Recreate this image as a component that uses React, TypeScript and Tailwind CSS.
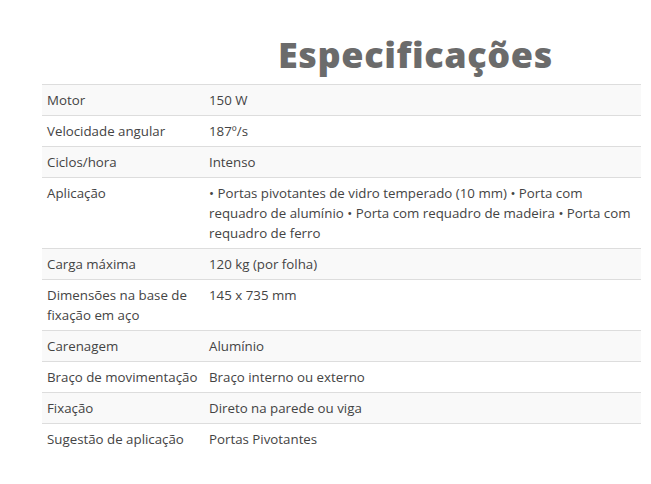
const rows: [string, string][] = [
  ['Motor', '150 W'],
  ['Velocidade angular', '187º/s'],
  ['Ciclos/hora', 'Intenso'],
  [
    'Aplicação',
    '• Portas pivotantes de vidro temperado (10 mm) • Porta com requadro de alumínio • Porta com requadro de madeira • Porta com requadro de ferro',
  ],
  ['Carga máxima', '120 kg (por folha)'],
  ['Dimensões na base de fixação em aço', '145 x 735 mm'],
  ['Carenagem', 'Alumínio'],
  ['Braço de movimentação', 'Braço interno ou externo'],
  ['Fixação', 'Direto na parede ou viga'],
  ['Sugestão de aplicação', 'Portas Pivotantes'],
];

export default function App() {
  return (
    <div className="w-[651px] h-[484px] bg-white font-['Open_Sans',sans-serif] text-[#444]">
      <div className="pt-[26px] pl-[42px] pr-[10px]">
        <h2 className="pl-[236px] text-[36px] leading-[58px] font-extrabold tracking-[0.6px] text-[#6b6b6b]">Especificações</h2>
        <table className="w-full border-collapse text-[13.3px] leading-[20px]">
          <tbody>
            {rows.map(([k, v], i) => (
              <tr key={k} className={i % 2 === 0 ? 'bg-[#f9f9f9]' : 'bg-white'}>
                <td className="w-[162px] align-top border-t border-[#ddd] px-[5px] pt-[5px] pb-[5px]">{k}</td>
                <td className="align-top border-t border-[#ddd] px-[5px] pt-[5px] pb-[5px]">{v}</td>
              </tr>
            ))}
          </tbody>
        </table>
      </div>
    </div>
  );
}
